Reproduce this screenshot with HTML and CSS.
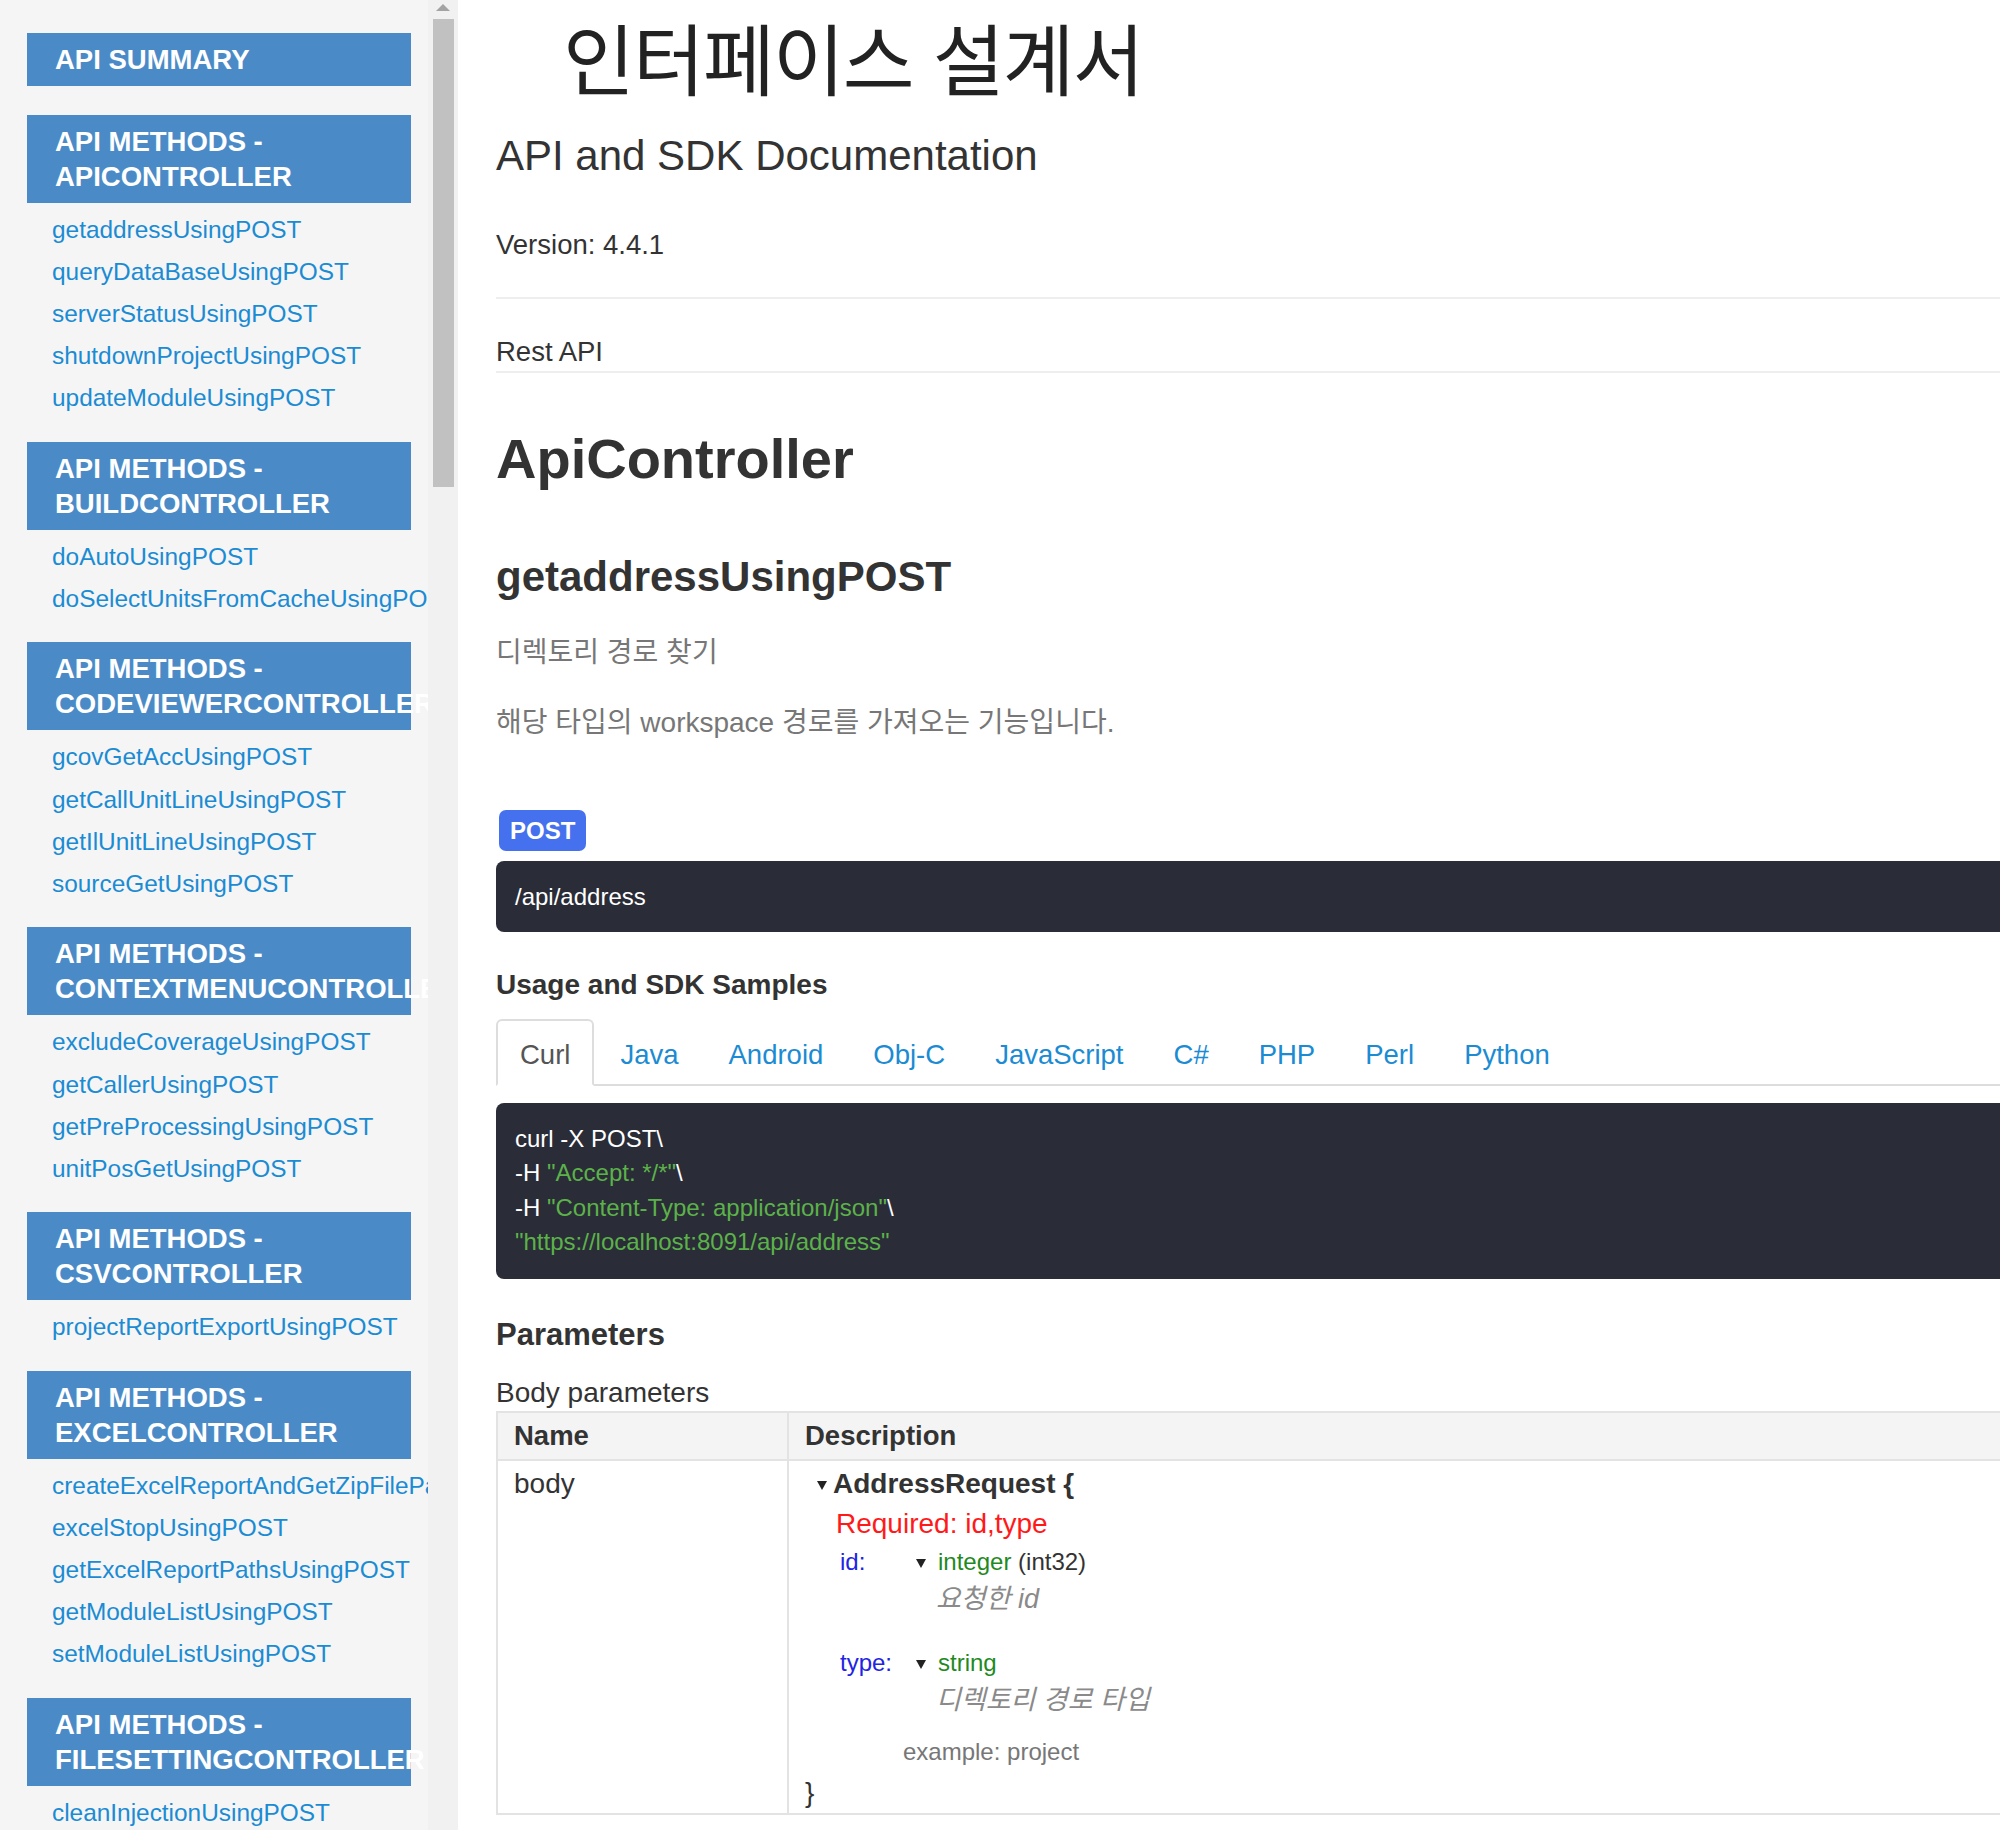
FILE: index.html
```html
<!DOCTYPE html>
<html lang="ko">
<head>
<meta charset="utf-8">
<title>인터페이스 설계서</title>
<link rel="stylesheet" href="styles.css">
</head>
<body>
<div class="page">
  <aside class="sidebar">
    <nav class="nav">
      <div class="nav-header">API SUMMARY</div>
      <ul class="nav-list"></ul>

      <div class="nav-header">API METHODS - APICONTROLLER</div>
      <ul class="nav-list">
        <li><a href="#">getaddressUsingPOST</a></li>
        <li><a href="#">queryDataBaseUsingPOST</a></li>
        <li><a href="#">serverStatusUsingPOST</a></li>
        <li><a href="#">shutdownProjectUsingPOST</a></li>
        <li><a href="#">updateModuleUsingPOST</a></li>
      </ul>

      <div class="nav-header">API METHODS - BUILDCONTROLLER</div>
      <ul class="nav-list">
        <li><a href="#">doAutoUsingPOST</a></li>
        <li><a href="#">doSelectUnitsFromCacheUsingPOST</a></li>
      </ul>

      <div class="nav-header">API METHODS - CODEVIEWERCONTROLLER</div>
      <ul class="nav-list">
        <li><a href="#">gcovGetAccUsingPOST</a></li>
        <li><a href="#">getCallUnitLineUsingPOST</a></li>
        <li><a href="#">getIlUnitLineUsingPOST</a></li>
        <li><a href="#">sourceGetUsingPOST</a></li>
      </ul>

      <div class="nav-header">API METHODS - CONTEXTMENUCONTROLLER</div>
      <ul class="nav-list">
        <li><a href="#">excludeCoverageUsingPOST</a></li>
        <li><a href="#">getCallerUsingPOST</a></li>
        <li><a href="#">getPreProcessingUsingPOST</a></li>
        <li><a href="#">unitPosGetUsingPOST</a></li>
      </ul>

      <div class="nav-header">API METHODS - CSVCONTROLLER</div>
      <ul class="nav-list">
        <li><a href="#">projectReportExportUsingPOST</a></li>
      </ul>

      <div class="nav-header">API METHODS - EXCELCONTROLLER</div>
      <ul class="nav-list">
        <li><a href="#">createExcelReportAndGetZipFilePathUsingPOST</a></li>
        <li><a href="#">excelStopUsingPOST</a></li>
        <li><a href="#">getExcelReportPathsUsingPOST</a></li>
        <li><a href="#">getModuleListUsingPOST</a></li>
        <li><a href="#">setModuleListUsingPOST</a></li>
      </ul>

      <div class="nav-header">API METHODS - FILESETTINGCONTROLLER</div>
      <ul class="nav-list">
        <li><a href="#">cleanInjectionUsingPOST</a></li>
        <li><a href="#">getFileSettingUsingPOST</a></li>
        <li><a href="#">setFileSettingUsingPOST</a></li>
      </ul>
    </nav>
    <div class="scrollbar">
      <div class="scroll-arrow"></div>
      <div class="scroll-thumb"></div>
    </div>
  </aside>

  <main class="content">
    <h1 class="doc-title">인터페이스 설계서</h1>
    <h2 class="doc-subtitle">API and SDK Documentation</h2>
    <p class="version">Version: 4.4.1</p>
    <hr class="rule">
    <div class="rest-api">Rest API</div>

    <h1 class="controller">ApiController</h1>
    <h2 class="method">getaddressUsingPOST</h2>
    <p class="method-summary">디렉토리 경로 찾기</p>
    <p class="method-notes">해당 타입의 workspace 경로를 가져오는 기능입니다.</p>

    <div class="method-badge">POST</div>
    <div class="endpoint">/api/address</div>

    <h3 class="section-title">Usage and SDK Samples</h3>
    <ul class="tabs">
      <li class="tab active">Curl</li>
      <li class="tab">Java</li>
      <li class="tab">Android</li>
      <li class="tab">Obj-C</li>
      <li class="tab">JavaScript</li>
      <li class="tab">C#</li>
      <li class="tab">PHP</li>
      <li class="tab">Perl</li>
      <li class="tab">Python</li>
    </ul>
<pre class="code">curl -X POST\
-H <span class="str">"Accept: */*"</span>\
-H <span class="str">"Content-Type: application/json"</span>\
<span class="str">"https://localhost:8091/api/address"</span></pre>

    <h2 class="params-title">Parameters</h2>
    <div class="params-sub">Body parameters</div>
    <table class="params">
      <thead>
        <tr><th class="col-name">Name</th><th>Description</th></tr>
      </thead>
      <tbody>
        <tr>
          <td class="col-name">body</td>
          <td class="desc-cell">
            <div class="schema-head"><span class="toggle"></span><span class="schema-title">AddressRequest {</span></div>
            <div class="required">Required: id,type</div>
            <div class="prop">
              <span class="prop-name">id:</span>
              <div class="prop-val">
                <div class="type-line"><span class="toggle small"></span><span class="type">integer</span> (int32)</div>
                <div class="prop-desc">요청한 id</div>
              </div>
            </div>
            <div class="prop prop-gap">
              <span class="prop-name">type:</span>
              <div class="prop-val">
                <div class="type-line"><span class="toggle small"></span><span class="type">string</span></div>
                <div class="prop-desc">디렉토리 경로 타입</div>
              </div>
            </div>
            <div class="example">example: project</div>
            <div class="brace-close">}</div>
          </td>
        </tr>
      </tbody>
    </table>
  </main>
</div>
</body>
</html>
```
FILE: styles.css
```css
html, body {
  margin: 0;
  padding: 0;
}
body {
  width: 2000px;
  height: 1830px;
  overflow: hidden;
  background: #ffffff;
  color: #333333;
  font-family: "Liberation Sans", Arial, "Noto Sans CJK KR", sans-serif;
}
.page {
  display: flex;
  height: 1830px;
}

/* ---------- sidebar ---------- */
.sidebar {
  flex: none;
  width: 458px;
  height: 1830px;
  display: flex;
  background: #f5f5f5;
}
.nav {
  width: 428px;
  overflow: hidden;
  padding-top: 33px;
}
.nav-header {
  margin-left: 27px;
  width: 328px;
  padding: 9px 28px;
  background: #4a8bc7;
  color: #ffffff;
  font-weight: 700;
  font-size: 27.5px;
  line-height: 35px;
}
.nav-list {
  list-style: none;
  margin: 0;
  padding: 6px 0 22.6px 52px;
}
.nav-list li {
  display: block;
  white-space: nowrap;
  font-size: 24.4px;
  line-height: 42.1px;
}
.nav-list a {
  color: #1b8bd3;
  text-decoration: none;
}
.scrollbar {
  flex: none;
  width: 30px;
  background: #f1f1f1;
  display: flex;
  flex-direction: column;
  align-items: center;
}
.scroll-arrow {
  width: 0;
  height: 0;
  margin-top: 4px;
  border-left: 7px solid transparent;
  border-right: 7px solid transparent;
  border-bottom: 7px solid #a3a3a3;
}
.scroll-thumb {
  width: 21px;
  height: 468px;
  margin-top: 8px;
  background: #c1c1c1;
}

/* ---------- content ---------- */
.content {
  flex: none;
  width: 1700px;
  padding: 6px 0 0 38px;
}
.doc-title {
  margin: 0;
  padding-left: 67px;
  font-family: "Noto Sans CJK KR", sans-serif;
  font-weight: 400;
  font-size: 78px;
  line-height: 100px;
  letter-spacing: -1.8px;
  color: #222222;
}
.doc-subtitle {
  margin: 25px 0 0;
  font-weight: 400;
  font-size: 42px;
  line-height: 50px;
}
.version {
  margin: 44px 0 0;
  font-size: 27.5px;
  line-height: 40px;
}
.rule {
  margin: 32px 0 0;
  border: 0;
  border-top: 2px solid #eeeeee;
  height: 0;
}
.rest-api {
  margin-top: 34px;
  font-size: 27.5px;
  line-height: 38px;
  border-bottom: 2px solid #eeeeee;
}
.controller {
  margin: 55px 0 0;
  font-size: 56px;
  line-height: 62px;
  font-weight: 700;
}
.method {
  margin: 62px 0 0;
  font-size: 42px;
  line-height: 50px;
  font-weight: 700;
}
.method-summary,
.method-notes {
  margin: 30.5px 0 0;
  color: #777777;
  font-size: 28px;
  line-height: 40px;
}
.method-notes {
  margin-top: 30.5px;
}
.method-badge {
  display: inline-block;
  margin-top: 66.5px;
  margin-left: 3px;
  padding: 0 11px;
  height: 41px;
  line-height: 41px;
  border-radius: 7px;
  background: #4571ee;
  color: #ffffff;
  font-weight: 700;
  font-size: 24px;
}
.endpoint {
  margin-top: 10px;
  height: 71px;
  padding: 0 19px;
  line-height: 71px;
  border-radius: 8px;
  background: #2a2c37;
  color: #ffffff;
  font-size: 24px;
}
.section-title {
  margin: 33px 0 0;
  font-size: 28px;
  line-height: 40px;
  font-weight: 700;
}
.tabs {
  list-style: none;
  margin: 14px 0 0;
  padding: 0;
  display: flex;
  border-bottom: 2px solid #dddddd;
}
.tab {
  margin-right: 2px;
  margin-bottom: -2px;
  padding: 15px 22px 13px;
  font-size: 27.5px;
  line-height: 37px;
  color: #1b8bd3;
  border: 2px solid transparent;
  border-bottom: 0;
  border-radius: 6px 6px 0 0;
}
.tab.active {
  color: #555555;
  background: #ffffff;
  border-color: #dddddd;
  border-bottom: 2px solid #ffffff;
  padding-bottom: 11px;
}
.code {
  margin: 17px 0 0;
  padding: 19px;
  border-radius: 8px;
  background: #2a2c37;
  color: #ffffff;
  font-family: "Liberation Sans", Arial, sans-serif;
  font-size: 24px;
  line-height: 34.5px;
  white-space: pre;
}
.code .str {
  color: #5cb24a;
}
.params-title {
  margin: 36px 0 0;
  font-size: 31px;
  line-height: 40px;
  font-weight: 700;
}
.params-sub {
  margin-top: 20px;
  font-size: 28px;
  line-height: 36px;
}
.params {
  width: 100%;
  border-collapse: collapse;
  border: 2px solid #e3e3e3;
}
.params th {
  height: 46px;
  padding: 0 16px;
  background: #f4f4f4;
  border: 2px solid #e3e3e3;
  text-align: left;
  font-size: 27.5px;
  font-weight: 700;
}
.params td {
  vertical-align: top;
  padding: 5px 16px 3px;
  border: 2px solid #e3e3e3;
  font-size: 28px;
  line-height: 36px;
}
.params .col-name {
  width: 257px;
}
.schema-head {
  line-height: 36px;
  padding-left: 12px;
}
.toggle {
  display: inline-block;
  width: 0;
  height: 0;
  margin-right: 6px;
  vertical-align: middle;
  border-left: 5px solid transparent;
  border-right: 5px solid transparent;
  border-top: 9px solid #222222;
}
.toggle.small {
  margin-right: 12px;
}
.schema-title {
  font-weight: 700;
}
.required {
  margin-top: 4px;
  padding-left: 31px;
  color: #ff1a1a;
  line-height: 36px;
}
.prop {
  display: flex;
  margin-top: 3px;
  padding-left: 35px;
}
.prop-gap {
  margin-top: 30px;
}
.prop-name {
  flex: none;
  width: 76px;
  color: #2323e3;
  font-size: 24px;
  line-height: 34px;
}
.type-line {
  font-size: 24px;
  line-height: 34px;
}
.type {
  color: #1f8a1f;
}
.prop-desc {
  margin-top: 3px;
  margin-left: 20px;
  color: #8a8a8a;
  font-style: italic;
  font-size: 27px;
  line-height: 34px;
}
.example {
  margin-top: 18px;
  margin-left: 98px;
  color: #777777;
  font-size: 24px;
  line-height: 34px;
}
.brace-close {
  margin-top: 7px;
  line-height: 34px;
}
```
